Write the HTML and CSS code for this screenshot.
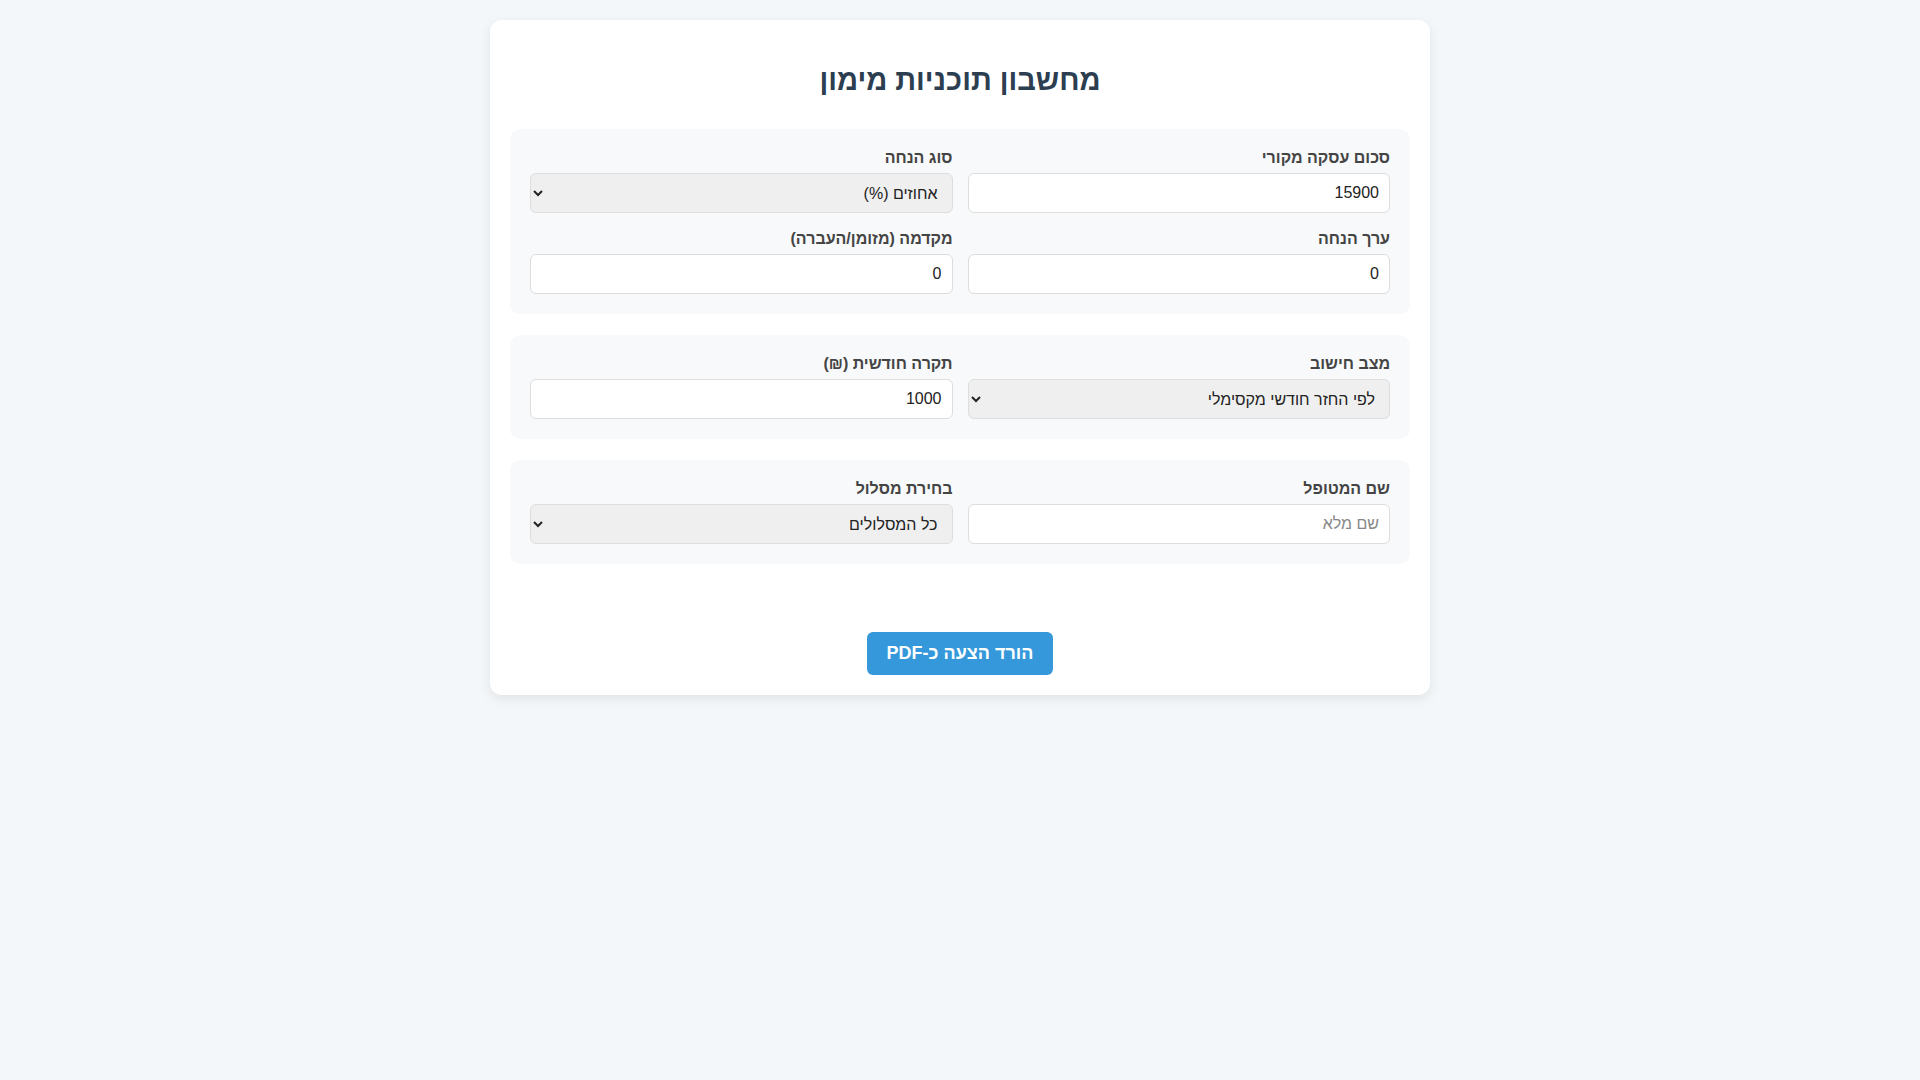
FILE: index.html
```html
<!DOCTYPE html>
<html lang="he" dir="rtl">
<head>
  <meta charset="UTF-8" />
  <meta name="viewport" content="width=device-width, initial-scale=1.0" />
  <title>מחשבון תוכניות מימון</title>
  <link rel="stylesheet" href="styles.css">
</head>
<body>
  <div class="container">
    <h1 class="title">מחשבון תוכניות מימון</h1>

    <div class="section">
      <div class="field">
        <label for="amount">סכום עסקה מקורי</label>
        <input type="number" id="amount" value="15900" />
      </div>
      <div class="field">
        <label for="discountType">סוג הנחה</label>
        <select id="discountType">
          <option>אחוזים (%)</option>
          <option>סכום (₪)</option>
        </select>
      </div>
      <div class="field">
        <label for="discountValue">ערך הנחה</label>
        <input type="number" id="discountValue" value="0" />
      </div>
      <div class="field">
        <label for="downPayment">מקדמה (מזומן/העברה)</label>
        <input type="number" id="downPayment" value="0" />
      </div>
    </div>

    <div class="section">
      <div class="field">
        <label for="mode">מצב חישוב</label>
        <select id="mode">
          <option>לפי החזר חודשי מקסימלי</option>
          <option>לפי מספר תשלומים</option>
        </select>
      </div>
      <div class="field">
        <label for="cap">תקרה חודשית (₪)</label>
        <input type="number" id="cap" value="1000" />
      </div>
    </div>

    <div class="section">
      <div class="field">
        <label for="clientName">שם המטופל</label>
        <input type="text" id="clientName" placeholder="שם מלא" />
      </div>
      <div class="field">
        <label for="track">בחירת מסלול</label>
        <select id="track">
          <option>כל המסלולים</option>
        </select>
      </div>
    </div>

    <div class="results" id="results"></div>

    <div class="actions">
      <button class="pdf-btn">הורד הצעה כ-PDF</button>
    </div>
  </div>
</body>
</html>
```

FILE: styles.css
```css
body {
  margin: 0;
  padding: 20px;
  font-family: "Liberation Sans", Arial, sans-serif;
  background: #f4f7f9;
  color: #333;
}

.container {
  max-width: 900px;
  margin: 0 auto;
  padding: 20px;
  background: #fff;
  border-radius: 12px;
  box-shadow: 0 4px 12px rgba(0,0,0,0.08);
}

.title {
  text-align: center;
  color: #2c3e50;
  font-size: 29px;
  margin: 24px 0 32px;
}

.section {
  display: grid;
  grid-template-columns: 1fr 1fr;
  column-gap: 15px;
  row-gap: 17px;
  padding: 20px;
  margin-bottom: 21px;
  background: #f8f9fa;
  border-radius: 10px;
}

.field label {
  display: block;
  font-size: 16px;
  font-weight: bold;
  color: #444;
  margin-bottom: 6px;
}

.field input,
.field select {
  width: 100%;
  box-sizing: border-box;
  height: 40px;
  padding: 8px 10px;
  font-size: 16px;
  font-family: "Liberation Sans", Arial, sans-serif;
  border: 1px solid #ddd;
  border-radius: 6px;
  color: #222;
}

.field input {
  background: #fff;
}

.field select {
  background: #efefef;
}

.field input::placeholder {
  color: #888;
}

.results {
  height: 47px;
}

.actions {
  text-align: center;
}

.pdf-btn {
  background: #3498db;
  color: #fff;
  border: none;
  border-radius: 6px;
  padding: 11px 20px;
  font-size: 18px;
  font-weight: bold;
  font-family: "Liberation Sans", Arial, sans-serif;
  cursor: pointer;
}
```
